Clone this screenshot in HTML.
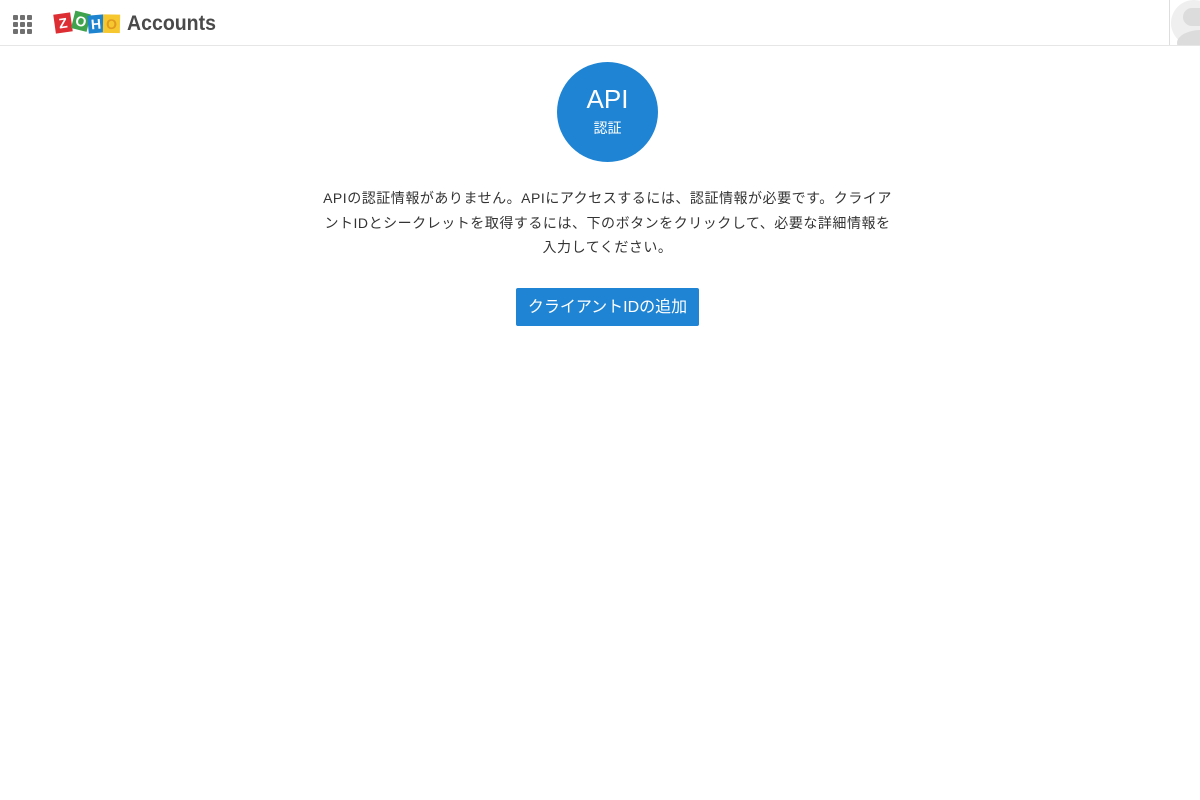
<!DOCTYPE html>
<html lang="ja">
<head>
<meta charset="utf-8">
<style>
html,body{margin:0;padding:0;width:1200px;height:800px;overflow:hidden;background:#fff;font-family:"Liberation Sans","Noto Sans CJK JP",sans-serif;}
.abs{position:absolute;white-space:nowrap;}
#hdr{position:absolute;left:0;top:0;width:1200px;height:45px;border-bottom:1px solid #e6e6e6;overflow:hidden;}
#circle{position:absolute;left:557px;top:62px;width:101px;height:100px;border-radius:50%;background:#1f84d3;}
.line{position:absolute;left:300px;width:615px;text-align:center;font-size:14px;line-height:24px;color:#333;white-space:nowrap;letter-spacing:0.53px;filter:blur(0.25px);}
#btn{position:absolute;left:516px;top:288px;width:183px;height:38px;background:#1f84d3;border-radius:2px;color:#fff;font-size:16px;line-height:39px;text-align:center;white-space:nowrap;overflow:hidden;}
</style>
</head>
<body>
<div id="hdr">
<svg class="abs" style="left:13px;top:15px;filter:blur(0.3px)" width="19" height="19" fill="#707070">
<rect x="0" y="0" width="5" height="5" rx="1"/><rect x="7" y="0" width="5" height="5" rx="1"/><rect x="14" y="0" width="5" height="5" rx="1"/>
<rect x="0" y="7" width="5" height="5" rx="1"/><rect x="7" y="7" width="5" height="5" rx="1"/><rect x="14" y="7" width="5" height="5" rx="1"/>
<rect x="0" y="14" width="5" height="5" rx="1"/><rect x="7" y="14" width="5" height="5" rx="1"/><rect x="14" y="14" width="5" height="5" rx="1"/>
</svg>
<svg class="abs" style="left:53px;top:10px;filter:blur(0.3px)" width="69" height="25" font-family="Liberation Sans" font-weight="700" font-size="14" text-anchor="middle" fill="#fff">
<g transform="rotate(-8 10 13)"><rect x="1.500" y="3.500" width="17" height="19" fill="#dc2e33"/><text x="10" y="18">Z</text></g>
<g transform="rotate(14 27 11)"><rect x="20" y="2" width="16" height="18" fill="#3fa34d"/><text x="28" y="16">O</text></g>
<g transform="rotate(-5 43 14)"><rect x="35" y="5" width="16" height="18" fill="#1f84cf"/><text x="43" y="19">H</text></g>
<g transform="rotate(1 59 14)"><rect x="50" y="4.500" width="17" height="18.500" fill="#f6c72f"/><text x="58.500" y="19" fill="#e09a1f">O</text></g>
</svg>
<div class="abs" style="left:127px;top:10px;font-size:21px;line-height:27px;font-weight:700;color:#4a4a4a;transform-origin:0 50%;transform:scaleX(0.93);">Accounts</div>
<div class="abs" style="left:1169px;top:0;width:1px;height:45px;background:#dedede;"></div>
<svg class="abs" style="left:1170px;top:0;filter:blur(0.3px)" width="30" height="46">
<circle cx="24" cy="23" r="23" fill="#efefef"/>
<rect x="13" y="8" width="30" height="18" rx="9" fill="#dcdcdc"/>
<ellipse cx="31" cy="43" rx="24" ry="13" fill="#dcdcdc"/>
</svg>
</div>
<div id="circle"></div>
<div class="abs" style="left:557px;top:83px;width:101px;text-align:center;font-size:26px;line-height:32px;color:#fff;">API</div>
<div class="abs" style="left:557px;top:118px;width:101px;text-align:center;font-size:14px;line-height:20px;color:#fff;">認証</div>
<div class="line" style="top:186px;">APIの認証情報がありません。APIにアクセスするには、認証情報が必要です。クライア</div>
<div class="line" style="top:211px;">ントIDとシークレットを取得するには、下のボタンをクリックして、必要な詳細情報を</div>
<div class="line" style="top:235px;">入力してください。</div>
<div id="btn">クライアントIDの追加</div>
</body>
</html>
